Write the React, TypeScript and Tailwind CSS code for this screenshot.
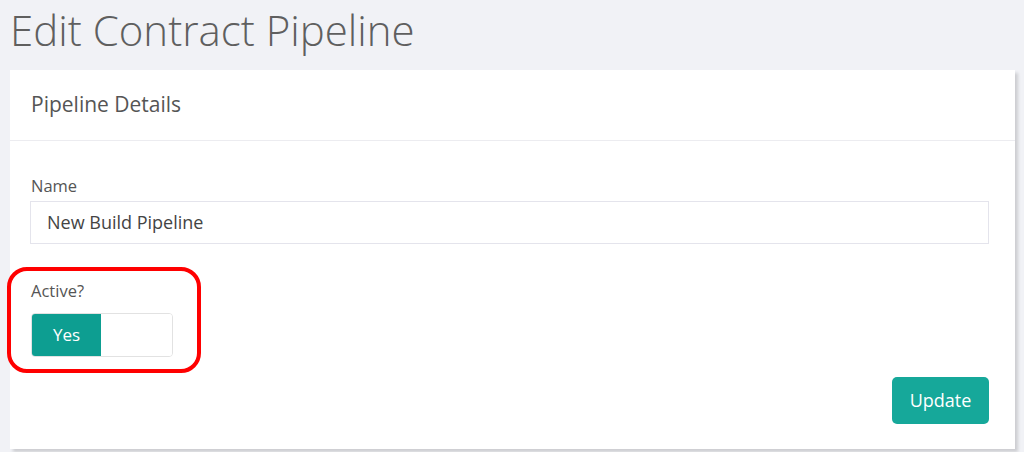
import React from "react";

export default function App() {
  return (
    <div
      className="w-[1024px] h-[452px] bg-[#f1f2f6] overflow-hidden"
      style={{ fontFamily: '"Open Sans", "Liberation Sans", sans-serif' }}
    >
      <h1 className="pl-[10px] pt-[2px] h-[70px] text-[42px] leading-[56px] font-light text-[#5f5f5f]">
        Edit Contract Pipeline
      </h1>
      <div className="ml-[10px] w-[1005px] h-[379px] bg-white shadow-[3px_3px_3px_rgba(0,0,0,0.15)] flex flex-col">
        <div className="h-[71px] border-b border-[#ececf0] px-[21px] flex items-center">
          <span className="text-[21px] text-[#555]">Pipeline Details</span>
        </div>
        <div className="flex flex-col px-[20px] pt-[34px]">
          <label className="text-[16.5px] leading-[22px] text-[#555] ml-[1px]">Name</label>
          <div className="mt-[4px] w-[959px] h-[43px] border border-[#e4e4ec] flex items-center px-[16px] text-[18px] text-[#444]">
            New Build Pipeline
          </div>
          <div className="mt-[23px] -ml-[23px] w-[194px] h-[106px] border-[4px] border-[#ff0000] rounded-[20px] pl-[20px] pt-[9px] flex flex-col">
            <label className="text-[16.5px] leading-[22px] text-[#555]">Active?</label>
            <div className="mt-[11px] w-[142px] h-[44px] border border-[#e2e2e2] rounded-[4px] flex overflow-hidden">
              <div className="w-[69px] h-full bg-[#0d9e91] flex items-center justify-center text-white text-[17px] font-medium">
                Yes
              </div>
              <div className="flex-1 bg-white" />
            </div>
          </div>
          <div className="flex justify-end w-[959px] mt-[4px]">
            <button className="w-[97px] h-[47px] rounded-[5px] bg-[#16a89a] text-white text-[18px]">
              Update
            </button>
          </div>
        </div>
      </div>
    </div>
  );
}
